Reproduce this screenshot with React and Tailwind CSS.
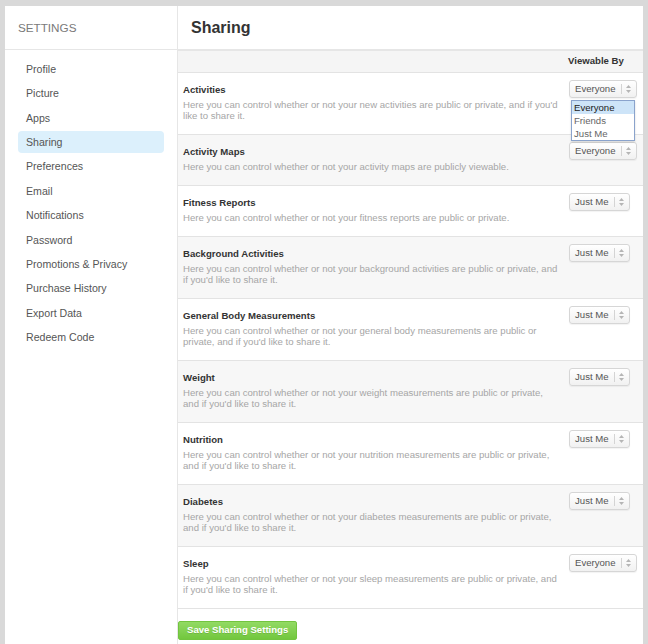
const navItems = [
  "Profile",
  "Picture",
  "Apps",
  "Sharing",
  "Preferences",
  "Email",
  "Notifications",
  "Password",
  "Promotions & Privacy",
  "Purchase History",
  "Export Data",
  "Redeem Code",
];

const rows = [
  { title: "Activities", desc: "Here you can control whether or not your new activities are public or private, and if you'd like to share it.", value: "Everyone", open: true },
  { title: "Activity Maps", desc: "Here you can control whether or not your activity maps are publicly viewable.", value: "Everyone" },
  { title: "Fitness Reports", desc: "Here you can control whether or not your fitness reports are public or private.", value: "Just Me" },
  { title: "Background Activities", desc: "Here you can control whether or not your background activities are public or private, and if you'd like to share it.", value: "Just Me" },
  { title: "General Body Measurements", desc: "Here you can control whether or not your general body measurements are public or private, and if you'd like to share it.", value: "Just Me" },
  { title: "Weight", desc: "Here you can control whether or not your weight measurements are public or private, and if you'd like to share it.", value: "Just Me" },
  { title: "Nutrition", desc: "Here you can control whether or not your nutrition measurements are public or private, and if you'd like to share it.", value: "Just Me" },
  { title: "Diabetes", desc: "Here you can control whether or not your diabetes measurements are public or private, and if you'd like to share it.", value: "Just Me" },
  { title: "Sleep", desc: "Here you can control whether or not your sleep measurements are public or private, and if you'd like to share it.", value: "Everyone" },
];

function SelectBox({ value }) {
  return (
    <div className="flex items-center h-[18px] rounded-[3px] border border-[#d6d6d6] bg-gradient-to-b from-white to-[#f1f1f1] shadow-[0_1px_1px_rgba(0,0,0,0.05)] pl-[5px] pr-[3px] text-[9.6px] text-[#555]">
      <span className="leading-[16px]">{value}</span>
      <span className="ml-[5px] h-[10px] w-px bg-[#d4d4d4]" />
      <svg width="9" height="10" viewBox="0 0 9 10" className="ml-[2px]">
        <path d="M4.5 1 L7 4 L2 4 Z" fill="#b5b5b5" />
        <path d="M4.5 9 L7 6 L2 6 Z" fill="#b5b5b5" />
      </svg>
    </div>
  );
}

export default function App() {
  return (
    <div
      className="min-h-screen bg-[#d9d9d9] pt-[6px] px-[5px]"
      style={{ fontFamily: '"Liberation Sans", Arial, sans-serif' }}
    >
      <div className="bg-white flex h-[638px] overflow-hidden">
        {/* Sidebar */}
        <aside className="w-[173px] shrink-0 border-r border-[#e6e6e6]">
          <div className="h-[44px] border-b border-[#e6e6e6] flex items-center pl-[13px]">
            <span className="text-[11.7px] text-[#7a7a7a]">SETTINGS</span>
          </div>
          <nav className="flex flex-col gap-[2.36px] pt-[8px] px-[13px]">
            {navItems.map((item) => (
              <div
                key={item}
                className={`h-[22px] leading-[22px] pl-[8px] rounded-[4px] text-[10.6px] text-[#555] ${
                  item === "Sharing" ? "bg-[#dcf0fc]" : ""
                }`}
              >
                {item}
              </div>
            ))}
          </nav>
        </aside>

        {/* Main */}
        <main className="flex-1 min-w-0">
          <div className="h-[45px] border-b-2 border-[#e6e6e6] flex items-center pl-[13px]">
            <h1 className="text-[16px] font-bold text-[#333]">Sharing</h1>
          </div>
          <div className="h-[22px] bg-[#f5f5f5] border-b border-[#e3e3e3] flex items-center pl-[390px]">
            <span className="text-[9.6px] font-bold text-[#333]">Viewable By</span>
          </div>

          {rows.map((row, i) => (
            <div
              key={row.title}
              className={`relative flex items-start pl-[5px] pt-[7px] pb-[13px] border-b border-[#e3e3e3] ${
                i % 2 === 1 ? "bg-[#f7f7f7]" : "bg-white"
              }`}
            >
              <div className="w-[378px] pt-[4px]">
                <div className="text-[9.6px] leading-[12px] font-bold text-[#333]">{row.title}</div>
                <p className="mt-[3px] text-[9.6px] leading-[11px] text-[#a6a6a6]">{row.desc}</p>
              </div>
              <div className="ml-[8px] flex">
                <SelectBox value={row.value} />
              </div>
              {row.open && (
                <div className="absolute z-10 left-[393px] top-[27px] w-[64px] border border-[#8aa3cc] bg-white text-[9.6px] leading-[13px] shadow-[0_1px_2px_rgba(0,0,0,0.15)]">
                  <div className="pl-[2px] bg-[#cde4f8] text-[#222]">Everyone</div>
                  <div className="pl-[2px] text-[#666]">Friends</div>
                  <div className="pl-[2px] text-[#666]">Just Me</div>
                </div>
              )}
            </div>
          ))}

          <div className="pt-[12px] flex">
            <button className="h-[19px] px-[8px] rounded-[2px] border border-[#72c43f] bg-gradient-to-b from-[#92da63] to-[#72c73d] text-white text-[9.6px] font-bold [text-shadow:0_1px_0_rgba(0,0,0,0.12)]">
              Save Sharing Settings
            </button>
          </div>
        </main>
      </div>
    </div>
  );
}
